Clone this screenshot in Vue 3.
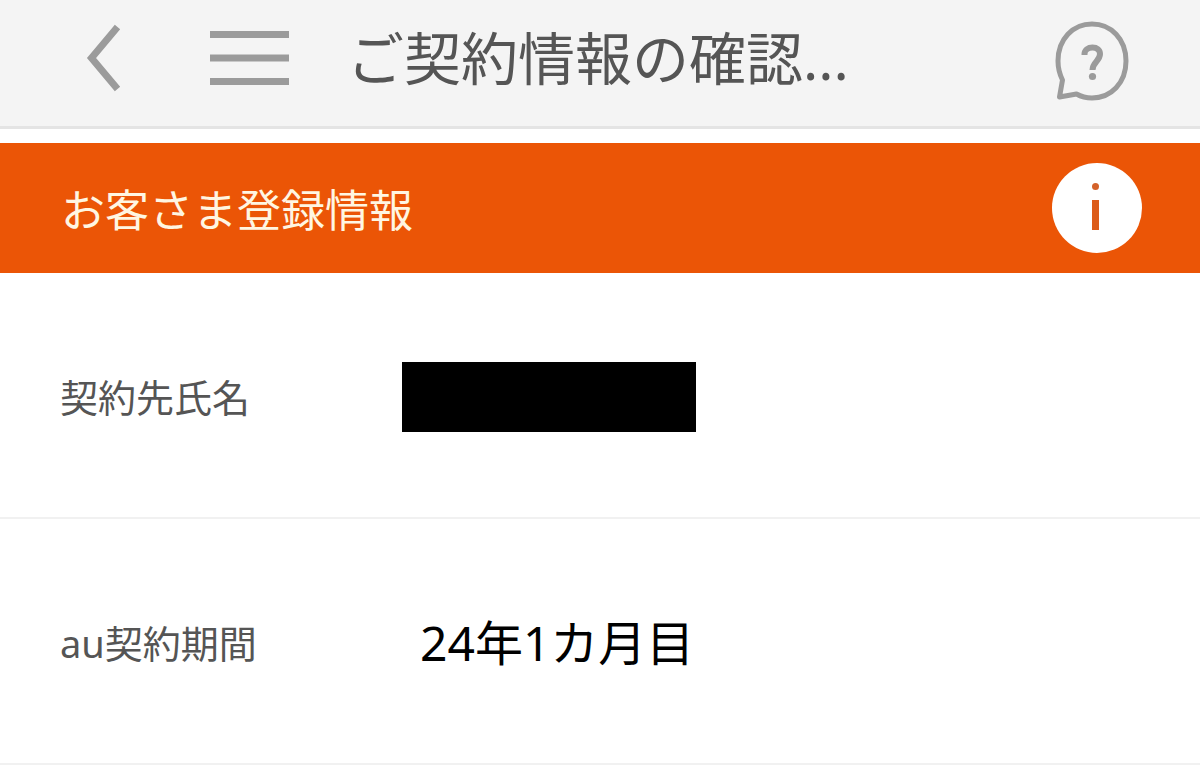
<script setup>
const rows = [
  { label: '契約先氏名', value: '', hidden: true },
  { label: 'au契約期間', value: '24年1カ月目', hidden: false },
]
</script>

<template>
  <div class="page">
    <header class="topbar">
      <button class="icon-button back" type="button" aria-label="戻る">
        <svg width="36" height="68" viewBox="0 0 36 68" aria-hidden="true">
          <path d="M31.500 3 L5.500 34 L31.500 65" fill="none" stroke="#9b9b9b" stroke-width="7" />
        </svg>
      </button>
      <button class="icon-button menu" type="button" aria-label="メニュー">
        <svg width="80" height="54" viewBox="0 0 80 54" aria-hidden="true">
          <path d="M0 3.500H79M0 27H79M0 50.500H79" fill="none" stroke="#9b9b9b" stroke-width="7" />
        </svg>
      </button>
      <h1 class="title">ご契約情報の確認...</h1>
      <button class="icon-button" type="button" aria-label="ヘルプ">
        <svg width="76" height="88" viewBox="0 -6 76 88" aria-hidden="true">
          <g fill="none" stroke="#9b9b9b" stroke-linejoin="round">
            <path d="M8.500 60 C5 53 4 47 4 41 C4 19 19 4 38 4 C57 4 72 19 72 41 C72 63 57 78 38 78 C31 78 26 76 22.500 74 L5.500 77 Z" stroke-width="5" />
            <path d="M30.500 35 V34 C30.500 30 34 27.500 38.500 27.500 C43 27.500 46 30 46 34 C46 41 38.500 42 38.500 50" stroke-width="6" />
          </g>
          <circle cx="38.500" cy="56.500" r="3.600" fill="#9b9b9b" />
        </svg>
      </button>
    </header>

    <main>
      <section>
        <div class="section-head">
          <h2 class="section-title">お客さま登録情報</h2>
          <button class="icon-button" type="button" aria-label="お客さま登録情報について">
            <svg width="90" height="90" viewBox="0 0 90 90" aria-hidden="true">
              <circle cx="45" cy="45" r="45" fill="#fff" />
              <circle cx="43.500" cy="23.500" r="3.500" fill="#d4622a" />
              <rect x="40" y="37" width="7" height="30" fill="#dc5c1a" />
            </svg>
          </button>
        </div>
        <dl class="rows">
          <div v-for="row in rows" :key="row.label" class="row">
            <dt class="label">{{ row.label }}</dt>
            <dd class="value">
              <span v-if="row.hidden" class="mask"></span>
              <span v-else class="value-text">{{ row.value }}</span>
            </dd>
          </div>
        </dl>
      </section>
    </main>
  </div>
</template>

<style>
body {
  margin: 0;
  background: #fff;
}
</style>

<style scoped>
.page {
  font-family: "Noto Sans", "Noto Sans CJK JP", sans-serif;
  font-weight: 400;
  color: #555;
  overflow: hidden;
}

.topbar {
  display: flex;
  align-items: center;
  box-sizing: border-box;
  min-height: 129px;
  padding: 0 70px 10px 86px;
  background: #f4f4f4;
  border-bottom: 3px solid #e4e4e4;
}

.icon-button {
  flex: none;
  padding: 0;
  border: 0;
  background: none;
  cursor: pointer;
}

.icon-button svg {
  display: block;
}

.menu {
  margin-left: 88px;
}

.title {
  flex: 1;
  margin: 0 0 0 57px;
  font-size: 57px;
  line-height: 80px;
  font-weight: 400;
  white-space: nowrap;
}

.section-head {
  display: flex;
  align-items: center;
  justify-content: space-between;
  min-height: 130px;
  margin-top: 14px;
  padding: 0 58px 0 61px;
  background: #eb5506;
}

.section-title {
  margin: 0;
  padding-top: 4px;
  font-size: 44px;
  line-height: 64px;
  font-weight: 400;
  color: #fff6e2;
}

.rows {
  margin: 0;
}

.row {
  display: grid;
  grid-template-columns: 342px 1fr;
  align-items: center;
  box-sizing: border-box;
  min-height: 246px;
  padding: 4px 60px 0;
  border-bottom: 2px solid #f1f1f1;
}

.label {
  font-size: 38px;
  line-height: 56px;
}

.value {
  margin: 0;
  font-size: 48px;
  line-height: 70px;
  color: #000;
}

.mask {
  display: block;
  width: 294px;
  height: 70px;
  background: #000;
}

.value-text {
  display: block;
  padding-left: 18px;
}
</style>
